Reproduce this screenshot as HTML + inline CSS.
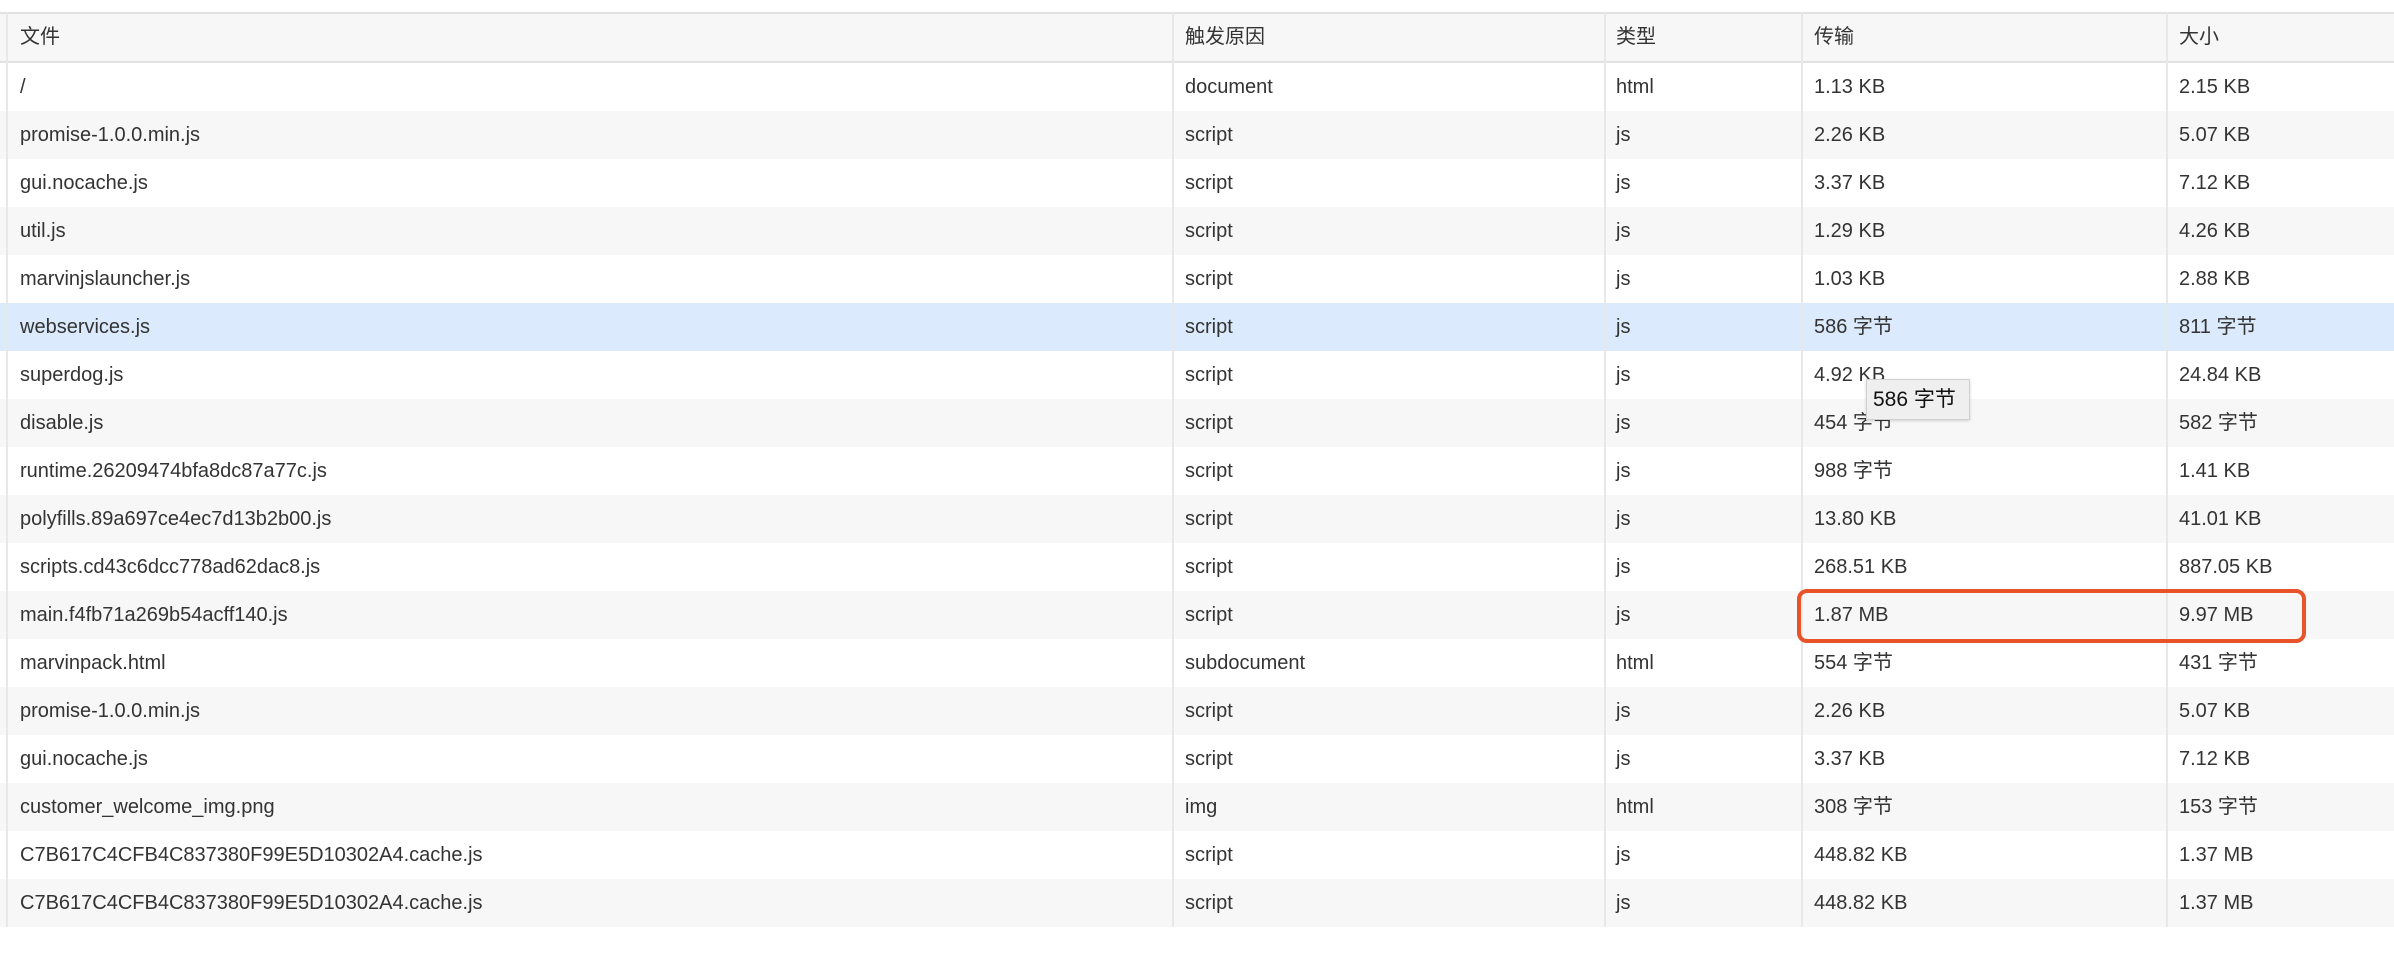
<!DOCTYPE html>
<html><head><meta charset="utf-8"><style>
*{margin:0;padding:0;box-sizing:border-box}
body{width:2394px;height:964px;background:#fff;position:relative;overflow:hidden;font-family:"Liberation Sans","Noto Sans CJK SC",sans-serif;font-size:20px;color:#333}
#w{position:absolute;left:0;top:2px;width:2394px;height:962px}
.row{position:absolute;left:0;width:2394px;height:48px}
.row span{position:absolute;top:0;line-height:48px;white-space:nowrap}
.c1{left:20px}.c2{left:1185px}.c3{left:1616px}.c4{left:1814px}.c5{left:2179px}
.hdr{top:10px;height:51px;background:#f7f7f7;border-top:2px solid #e2e2e2;border-bottom:2px solid #e2e2e2}
.hdr span{line-height:47px}
.vl{position:absolute;top:10px;width:2px;height:915px;background:#e8e8e8}
</style></head><body><div id="w">
<div class="row hdr"><span class="c1">文件</span><span class="c2">触发原因</span><span class="c3">类型</span><span class="c4">传输</span><span class="c5">大小</span></div>
<div class="row" style="top:61px"><span class="c1">/</span><span class="c2">document</span><span class="c3">html</span><span class="c4">1.13 KB</span><span class="c5">2.15 KB</span></div>
<div class="row" style="top:109px;background:#f7f7f7"><span class="c1">promise-1.0.0.min.js</span><span class="c2">script</span><span class="c3">js</span><span class="c4">2.26 KB</span><span class="c5">5.07 KB</span></div>
<div class="row" style="top:157px"><span class="c1">gui.nocache.js</span><span class="c2">script</span><span class="c3">js</span><span class="c4">3.37 KB</span><span class="c5">7.12 KB</span></div>
<div class="row" style="top:205px;background:#f7f7f7"><span class="c1">util.js</span><span class="c2">script</span><span class="c3">js</span><span class="c4">1.29 KB</span><span class="c5">4.26 KB</span></div>
<div class="row" style="top:253px"><span class="c1">marvinjslauncher.js</span><span class="c2">script</span><span class="c3">js</span><span class="c4">1.03 KB</span><span class="c5">2.88 KB</span></div>
<div class="row" style="top:301px;background:#dbeafc"><span class="c1">webservices.js</span><span class="c2">script</span><span class="c3">js</span><span class="c4">586 字节</span><span class="c5">811 字节</span></div>
<div class="row" style="top:349px"><span class="c1">superdog.js</span><span class="c2">script</span><span class="c3">js</span><span class="c4">4.92 KB</span><span class="c5">24.84 KB</span></div>
<div class="row" style="top:397px;background:#f7f7f7"><span class="c1">disable.js</span><span class="c2">script</span><span class="c3">js</span><span class="c4">454 字节</span><span class="c5">582 字节</span></div>
<div class="row" style="top:445px"><span class="c1">runtime.26209474bfa8dc87a77c.js</span><span class="c2">script</span><span class="c3">js</span><span class="c4">988 字节</span><span class="c5">1.41 KB</span></div>
<div class="row" style="top:493px;background:#f7f7f7"><span class="c1">polyfills.89a697ce4ec7d13b2b00.js</span><span class="c2">script</span><span class="c3">js</span><span class="c4">13.80 KB</span><span class="c5">41.01 KB</span></div>
<div class="row" style="top:541px"><span class="c1">scripts.cd43c6dcc778ad62dac8.js</span><span class="c2">script</span><span class="c3">js</span><span class="c4">268.51 KB</span><span class="c5">887.05 KB</span></div>
<div class="row" style="top:589px;background:#f7f7f7"><span class="c1">main.f4fb71a269b54acff140.js</span><span class="c2">script</span><span class="c3">js</span><span class="c4">1.87 MB</span><span class="c5">9.97 MB</span></div>
<div class="row" style="top:637px"><span class="c1">marvinpack.html</span><span class="c2">subdocument</span><span class="c3">html</span><span class="c4">554 字节</span><span class="c5">431 字节</span></div>
<div class="row" style="top:685px;background:#f7f7f7"><span class="c1">promise-1.0.0.min.js</span><span class="c2">script</span><span class="c3">js</span><span class="c4">2.26 KB</span><span class="c5">5.07 KB</span></div>
<div class="row" style="top:733px"><span class="c1">gui.nocache.js</span><span class="c2">script</span><span class="c3">js</span><span class="c4">3.37 KB</span><span class="c5">7.12 KB</span></div>
<div class="row" style="top:781px;background:#f7f7f7"><span class="c1">customer_welcome_img.png</span><span class="c2">img</span><span class="c3">html</span><span class="c4">308 字节</span><span class="c5">153 字节</span></div>
<div class="row" style="top:829px"><span class="c1">C7B617C4CFB4C837380F99E5D10302A4.cache.js</span><span class="c2">script</span><span class="c3">js</span><span class="c4">448.82 KB</span><span class="c5">1.37 MB</span></div>
<div class="row" style="top:877px;background:#f7f7f7"><span class="c1">C7B617C4CFB4C837380F99E5D10302A4.cache.js</span><span class="c2">script</span><span class="c3">js</span><span class="c4">448.82 KB</span><span class="c5">1.37 MB</span></div>
<div class="vl" style="left:6px"></div>
<div class="vl" style="left:1172px"></div>
<div class="vl" style="left:1604px"></div>
<div class="vl" style="left:1801px"></div>
<div class="vl" style="left:2166px"></div>
<div style="position:absolute;left:1866px;top:377px;width:104px;height:41px;background:#efefef;border:1px solid #cfcfcf;box-shadow:0 1px 3px rgba(0,0,0,.15);color:#111;font-size:21px;line-height:39px;padding-left:6px;white-space:nowrap">586 字节</div>
<div style="position:absolute;left:1797px;top:587px;width:509px;height:54px;border:4px solid #e8532a;border-radius:10px"></div>
</div></body></html>
